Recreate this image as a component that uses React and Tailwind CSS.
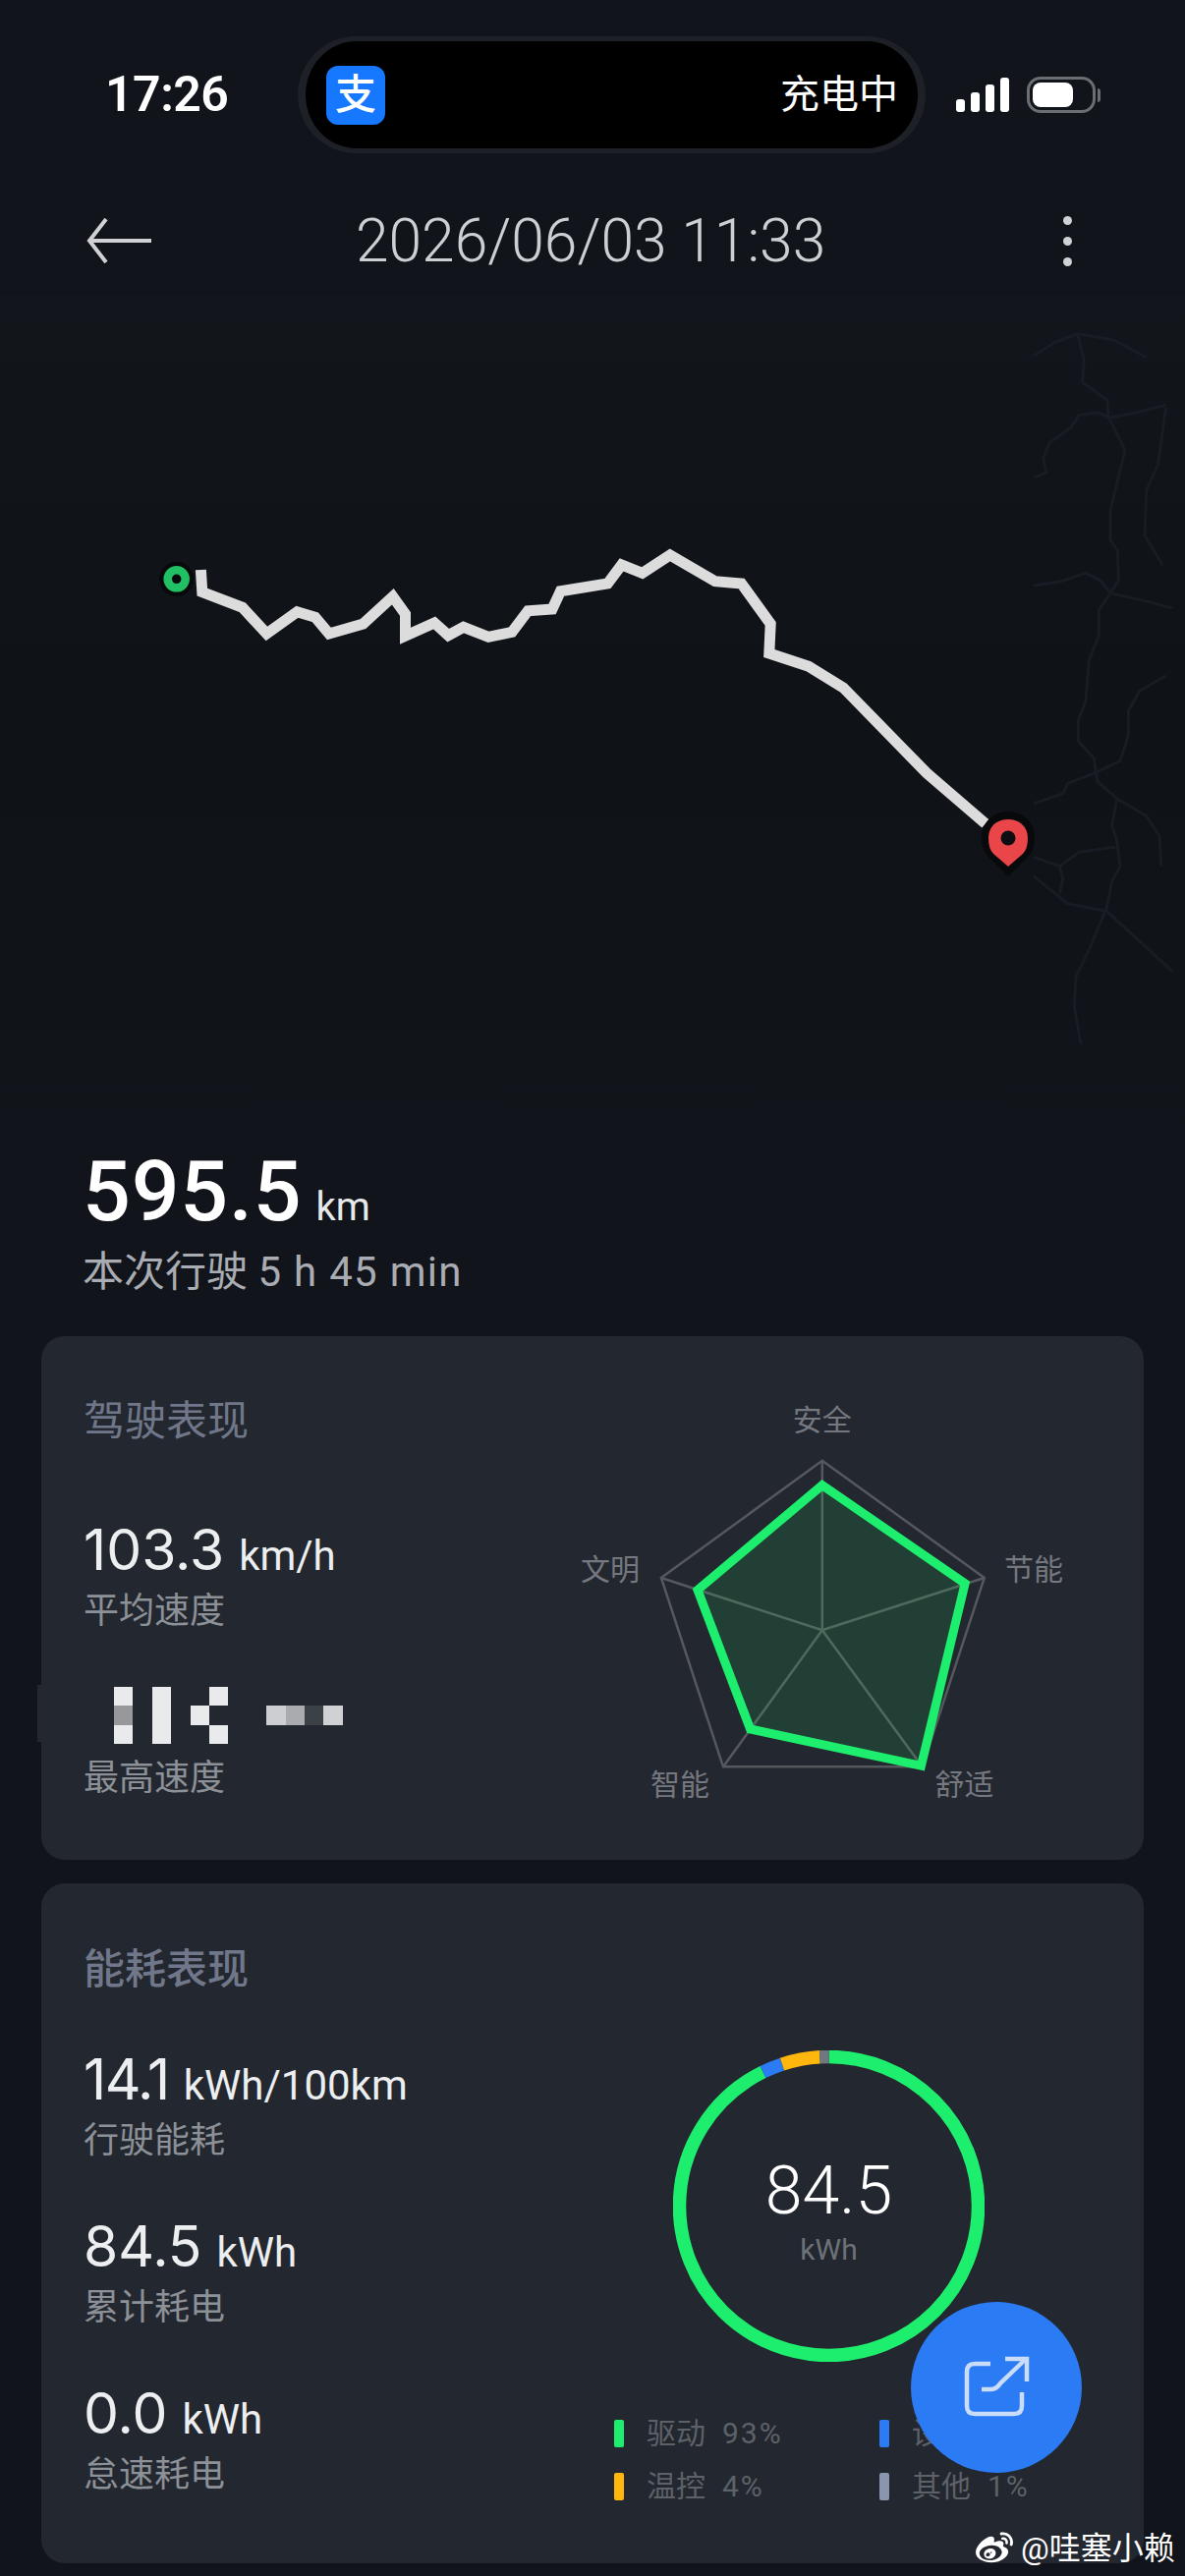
import React from 'react';
import { FaWeibo } from 'react-icons/fa';

// route + roads are traced from crops of the map, so convert back to page coords
const fromRouteCrop = ([x, y]) => `${(100 + x / 1.4177).toFixed(1)},${(220 + y / 3).toFixed(1)}`;
const fromRoadCrop = ([x, y]) => `${(900 + x / 3).toFixed(1)},${(y / 1.96).toFixed(1)}`;

const route = [
  [148, 180], [150, 248], [208, 295], [243, 375], [287, 308], [313, 325], [333, 375], [382, 345],
  [425, 262], [443, 315], [443, 382], [485, 342], [505, 380], [527, 355], [563, 385], [597, 370],
  [620, 305], [655, 300], [667, 245], [735, 222], [755, 165], [785, 190], [825, 135], [890, 215],
  [928, 222], [970, 345], [968, 435], [1025, 475], [1075, 540], [1195, 800], [1280, 955],
];

const roads = [
  [[456, 122], [520, 95], [590, 78], [700, 90], [800, 125]],
  [[590, 78], [610, 130], [605, 175], [680, 210], [685, 245], [735, 310], [690, 430], [690, 490], [712, 510], [715, 570], [685, 600], [655, 630], [655, 680], [625, 730], [615, 810], [592, 850], [592, 890], [640, 925], [650, 970], [710, 1005], [800, 1040], [840, 1080], [845, 1140]],
  [[456, 365], [495, 355], [485, 325], [505, 295], [570, 265], [595, 240], [650, 235], [690, 245], [770, 235], [860, 220]],
  [[456, 580], [540, 572], [615, 555], [660, 570], [690, 595], [790, 610], [880, 625]],
  [[456, 1015], [545, 995], [560, 975], [640, 955], [720, 930], [745, 880], [745, 830], [780, 790], [860, 760]],
  [[710, 1005], [695, 1060], [710, 1090], [720, 1140], [695, 1170], [680, 1220], [630, 1300], [585, 1360], [580, 1420], [600, 1495]],
  [[456, 1122], [535, 1140], [595, 1112], [705, 1102]],
  [[535, 1140], [545, 1165], [535, 1195]],
  [[456, 1160], [560, 1215], [680, 1230], [780, 1290], [880, 1350]],
  [[860, 225], [835, 340], [800, 390], [795, 480], [850, 540]],
];

// Mosaic over the top speed value: 12 columns, 3 rows
const mosaic = [
  ['#e8eaeb', null, '#e8eaeb', null, null, '#e8eaeb', null, null, null, null, null, null],
  ['#96989c', null, '#e8eaeb', null, '#e8eaeb', null, null, null, '#ccced1', '#a9abae', '#3c4047', '#cfd1d3'],
  ['#e8eaeb', null, '#e8eaeb', null, null, '#e8eaeb', null, null, null, null, null, null],
];

const ringSegments = [
  { color: '#1eee6e', pct: 92.7 },
  { color: '#2b7bf5', pct: 2.2 },
  { color: '#ffb60d', pct: 4.1 },
  { color: '#6f7780', pct: 1 },
];

const legend = [
  { color: 'bg-[#1eee6e]', label: '驱动', pct: '93%' },
  { color: 'bg-[#2b7bf5]', label: '设备', pct: '2%' },
  { color: 'bg-[#ffb60d]', label: '温控', pct: '4%' },
  { color: 'bg-[#8a96ad]', label: '其他', pct: '1%' },
];

function StatusBar() {
  return (
    <div className="flex items-center pt-[37px] pl-[107px]">
      <span className="w-[122px] text-[50px] leading-[119px] font-semibold text-white tracking-[-0.5px]">17:26</span>
      <div className="ml-[74px] w-[639px] h-[119px] rounded-full bg-black border-x-[8px] border-y-[5px] border-[#1d2026] flex items-center justify-between pl-[21px] pr-[20px]">
        <div className="w-[60px] h-[60px] rounded-[12px] bg-[#1677ff] flex items-center justify-center text-[42px] leading-none font-medium text-white">支</div>
        <span className="text-[40px] leading-none text-white">充电中</span>
      </div>
      <div className="ml-[31px] flex items-end gap-[6px] h-[35px]">
        <div className="w-[9px] h-[13px] rounded-[3px] bg-white" />
        <div className="w-[9px] h-[20px] rounded-[3px] bg-white" />
        <div className="w-[9px] h-[28px] rounded-[3px] bg-white" />
        <div className="w-[9px] h-[35px] rounded-[3px] bg-white" />
      </div>
      <div className="ml-[18px] flex items-center gap-[2px]">
        <div className="w-[70px] h-[37px] rounded-[14px] border-[3px] border-[#6b6e73] p-[3px]">
          <div className="w-[41px] h-full rounded-[8px] bg-white" />
        </div>
        <div className="w-[3px] h-[14px] rounded-r-full bg-[#6b6e73]" />
      </div>
    </div>
  );
}

function Header() {
  return (
    <div className="flex items-center h-[48px] mt-[65px] pl-[88px] pr-[115px]">
      <svg width="66" height="46" viewBox="0 0 66 46" fill="none" stroke="#cfd1d4" strokeWidth="4">
        <path d="M66 23H4" />
        <path d="M20 1L3 23L20 45" />
      </svg>
      <span className="ml-[208px] pt-[2px] text-[60.5px] leading-[48px] font-light text-[#cdd0d3]">2026/06/03 11:33</span>
      <div className="ml-auto flex flex-col gap-[12px]">
        <div className="w-[9px] h-[9px] rounded-full bg-[#d0d2d5]" />
        <div className="w-[9px] h-[9px] rounded-full bg-[#d0d2d5]" />
        <div className="w-[9px] h-[9px] rounded-full bg-[#d0d2d5]" />
      </div>
    </div>
  );
}

function RouteMap() {
  return (
    <div className="mt-[31px] h-[850px] bg-linear-to-b from-[#12151b] via-[#0f1217] to-[#11141a]">
      <svg width="1206" height="850" viewBox="0 0 1206 850" className="block">
        {roads.map((road, i) => (
          <polyline key={i} points={road.map(fromRoadCrop).join(' ')} fill="none" stroke="#181c24" strokeWidth="3" />
        ))}
        <polyline points={route.map(fromRouteCrop).join(' ')} fill="none" stroke="#dcdcdc" strokeWidth="11" strokeLinejoin="miter" />
        <circle cx="179.7" cy="289.3" r="17.5" fill="#07090b" />
        <circle cx="179.7" cy="289.3" r="9" fill="none" stroke="#22c064" strokeWidth="8.5" />
        <path d="M1026 592L1006 572Q999 565 999 553C999 536 1012 526 1026 526C1040 526 1053 536 1053 553Q1053 565 1046 572Z" fill="#07090b" />
        <path d="M1026 582L1011 569Q1006 564 1006 553C1006 541 1015 534 1026 534C1037 534 1046 541 1046 553Q1046 564 1041 569Z" fill="#ea4549" />
        <circle cx="1026" cy="553" r="7.5" fill="#0c0e12" />
      </svg>
    </div>
  );
}

function Metric({ value, unit, label, className = '', valueClass = '' }) {
  return (
    <div className={className}>
      <div className="flex items-baseline h-[60px] leading-[60px] text-[#eceef0]">
        <span className={`font-[Inter,sans-serif] text-[57px] ${valueClass}`}>{value}</span>
        <span className="ml-[15px] text-[42px]">{unit}</span>
      </div>
      <div className="mt-[14px] text-[36px] leading-[36px] text-[#8c9097]">{label}</div>
    </div>
  );
}

function RadarChart() {
  const outer = '836.8,1486.7 1001.8,1606 938.6,1798.3 736,1798.3 672.9,1606';
  const score = '836.8,1511.7 982.1,1611.7 937.5,1797.3 763.6,1760 710,1618.3';
  const labels = [
    ['安全', 836.8, 1456],
    ['节能', 1052, 1608],
    ['文明', 621, 1608],
    ['智能', 692, 1827],
    ['舒适', 981.4, 1827],
  ];
  return (
    <svg width="560" height="533" viewBox="582 1360 560 533" className="block shrink-0">
      <polygon points={outer} fill="none" stroke="#55585c" strokeWidth="2.5" />
      {outer.split(' ').map((pt) => {
        const [x, y] = pt.split(',');
        return <line key={pt} x1="836.8" y1="1659.3" x2={x} y2={y} stroke="#55585c" strokeWidth="2.5" />;
      })}
      <polygon points={score} fill="#1eee6e" fillOpacity="0.12" stroke="#1eee6e" strokeWidth="9" />
      {labels.map(([text, x, y]) => (
        <text key={text} x={x} y={y} textAnchor="middle" fontSize="30" fill="#75787f">{text}</text>
      ))}
    </svg>
  );
}

function EnergyRing() {
  const r = 152;
  const c = 2 * Math.PI * r;
  let offset = 0;
  return (
    <div className="relative ml-[60px] w-[317px] h-[317px]">
      <svg width="317" height="317" viewBox="0 0 317 317" className="block -rotate-90">
        {ringSegments.map((seg) => {
          const len = (seg.pct / 100) * c;
          const el = (
            <circle
              key={seg.color}
              cx="158.5"
              cy="158.5"
              r={r}
              fill="none"
              stroke={seg.color}
              strokeWidth="13.5"
              strokeDasharray={`${len} ${c - len}`}
              strokeDashoffset={-offset}
            />
          );
          offset += len;
          return el;
        })}
      </svg>
      <div className="absolute inset-0 flex flex-col items-center pt-[108px]">
        <span className="text-[68px] leading-[70px] font-light text-white">84.5</span>
        <span className="mt-[8px] text-[30px] leading-[34px] text-[#6d7178]">kWh</span>
      </div>
    </div>
  );
}

export default function App() {
  return (
    <div className="relative w-[1206px] h-[2622px] overflow-hidden bg-[#11141a] font-[Roboto,'Noto_Sans_CJK_SC',sans-serif]">
      <StatusBar />
      <Header />
      <RouteMap />

      {/* distance summary */}
      <div className="pl-[84px] mt-[23px]">
        <div className="flex items-baseline h-[80px] leading-[80px] text-white">
          <span className="text-[86px] font-medium tracking-[0.8px]">595.5</span>
          <span className="ml-[14px] text-[40px] text-[#e6e8ea]">km</span>
        </div>
        <div className="mt-[20px] text-[42px] leading-[44px] text-[#a9adb3]">
          本次行驶 <span className="tracking-[1.3px]">5 h 45 min</span>
        </div>
      </div>

      {/* driving card */}
      <div className="relative mx-[42px] mt-[43px] h-[533px] rounded-[24px] bg-[#23272f] flex">
        <div className="absolute left-[-4px] top-[355px] w-[4px] h-[58px] bg-[#23272f]" />
        <div className="w-[540px] shrink-0 pl-[43px] pt-[67px]">
          <div className="text-[42px] leading-[40px] text-[#71778a]">驾驶表现</div>
          <Metric className="mt-[81px]" value="103.3" unit="km/h" label="平均速度" />
          <div className="mt-[59px] ml-[31px] grid grid-cols-[repeat(12,19.4px)] grid-rows-[repeat(3,19.4px)] w-max">
            {mosaic.flat().map((color, i) => (
              <div key={i} style={color ? { backgroundColor: color } : undefined} />
            ))}
          </div>
          <div className="mt-[17px] text-[36px] leading-[36px] text-[#8c9097]">最高速度</div>
        </div>
        <RadarChart />
      </div>

      {/* energy card */}
      <div className="mx-[42px] mt-[24px] h-[692px] rounded-[24px] bg-[#23272f] flex">
        <div className="w-[583px] shrink-0 pl-[43px] pt-[68px]">
          <div className="text-[42px] leading-[40px] font-medium text-[#71778a]">能耗表现</div>
          <Metric className="mt-[62px]" value="14.1" valueClass="tracking-[-1.5px]" unit="kWh/100km" label="行驶能耗" />
          <Metric className="mt-[60px]" value="84.5" unit="kWh" label="累计耗电" />
          <Metric className="mt-[60px]" value="0.0" unit="kWh" label="怠速耗电" />
        </div>
        <div className="pt-[170px]">
          <EnergyRing />
          <div className="mt-[59px] grid grid-cols-[270px_270px] gap-y-[26px]">
            {legend.map((item) => (
              <div key={item.label} className="flex items-center h-[28px] text-[30px] leading-[28px] text-[#5d6168]">
                <div className={`w-[10px] h-[28px] rounded-[2px] ${item.color}`} />
                <span className="ml-[23px]">{item.label}</span>
                <span className="ml-[17px] tracking-[2px]">{item.pct}</span>
              </div>
            ))}
          </div>
        </div>
      </div>

      {/* floating share button */}
      <div className="absolute left-[927px] top-[2343px] w-[174px] h-[174px] rounded-full bg-[#2b7bf5]">
        <svg width="174" height="174" viewBox="0 0 174 174" fill="none" stroke="#c9dcf9" strokeWidth="4.5">
          <path d="M81 63H65Q57 63 57 71V106Q57 114 65 114H105Q113 114 113 106V92" />
          <path d="M72 89H81Q87 89 91 83L116 59" />
          <path d="M96 58H118V81" />
        </svg>
      </div>

      {/* watermark */}
      <div className="absolute left-[990px] top-[2575px] flex items-center text-white">
        <FaWeibo className="w-[44px] h-[38px]" />
        <span className="ml-[5px] text-[32px] leading-[36px]">@哇塞小赖</span>
      </div>
    </div>
  );
}
